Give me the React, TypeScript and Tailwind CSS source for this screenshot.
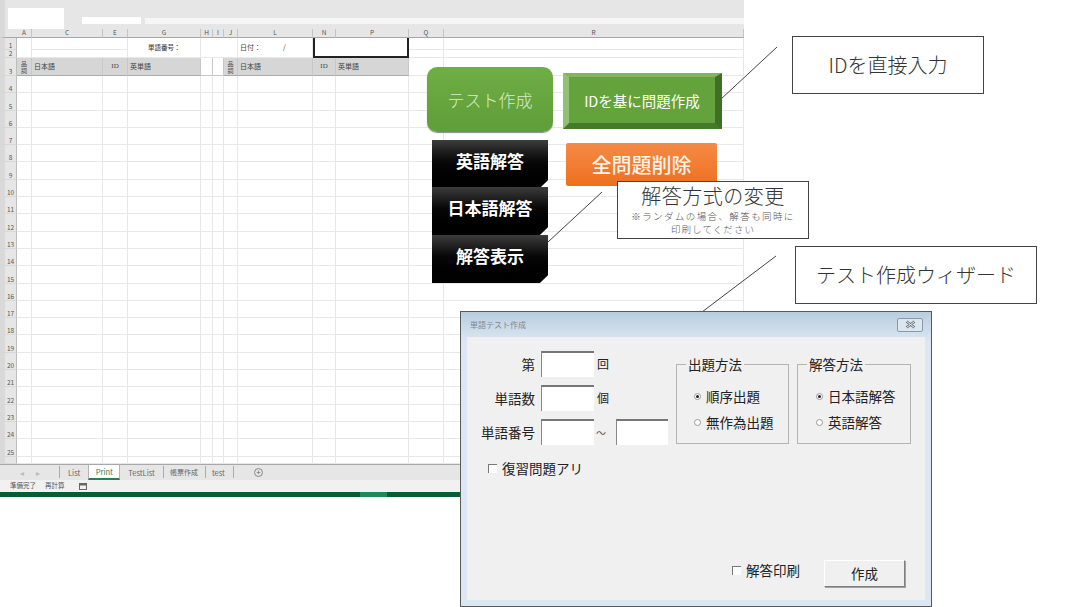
const columns = ["A", "C", "E", "G", "H", "I", "J", "L", "N", "P", "Q", "R"];
const rowNumbers = Array.from({ length: 22 }, (_, i) => i + 4);
const cell = "border-r border-b border-[#e8e8e8]";
const rowHead =
  "flex items-end justify-center border-l-[5px] border-l-[#d9d9d9] border-r border-b border-r-[#bdbdbd] border-b-[#d8d8d8] bg-[#e6e6e6] text-[6.5px] leading-[8px] text-[#555]";

function Sheet() {
  return (
    <div className="grid grid-cols-[17px_15px_71px_25px_73px_12px_11px_14px_75px_23px_73px_35px_300px] grid-rows-[9px_12px_8px_18px_repeat(22,17.3px)_7px] text-[#444]">
      <div className="border-l-[5px] border-l-[#d9d9d9] border-b border-b-[#a8a8a8] bg-[#e6e6e6]" />
      {columns.map((c) => (
        <div
          key={c}
          className="flex items-center justify-center border-r border-b border-r-[#c4c4c4] border-b-[#a8a8a8] bg-[#e6e6e6] text-[6.5px] text-[#555]"
        >
          {c}
        </div>
      ))}

      <div className={rowHead}>1</div>
      <div className={`row-span-2 ${cell}`} />
      <div className={`col-span-2 ${cell}`} />
      <div className={`row-span-2 flex items-center pl-5 text-[6.5px] font-medium ${cell}`}>単語番号：</div>
      <div className={`col-span-3 row-span-2 ${cell}`} />
      <div className={`row-span-2 flex items-center pl-0.5 text-[7px] ${cell}`}>
        <span className="w-[43px]">日付：</span>
        <span>/</span>
      </div>
      <div className="col-span-2 row-span-2 border-x-2 border-b-2 border-[#222]" />
      <div className={cell} />
      <div className={cell} />

      <div className={rowHead}>2</div>
      <div className={`col-span-2 ${cell}`} />
      <div className={cell} />
      <div className={cell} />

      <div className={rowHead}>3</div>
      <HeaderCells />
      <div className="border-r border-b border-[#c8c8c8]" />
      <div className="border-r border-b border-[#c8c8c8]" />
      <HeaderCells />
      <div className={cell} />
      <div className={cell} />

      {rowNumbers.map((n) => (
        <Row key={n} label={String(n)} />
      ))}
      <Row label="" />
    </div>
  );
}

function HeaderCells() {
  const grey = "flex items-center border-r border-b border-r-[#c8c8c8] border-b-[#ababab] bg-[#d6d6d6] text-[7px]";
  return (
    <>
      <div className={`${grey} justify-center`}>
        <span className="text-center text-[6px] leading-[7px]">
          品<br />詞
        </span>
      </div>
      <div className={`${grey} pl-[2px]`}>日本語</div>
      <div className={`${grey} justify-center font-['Liberation_Serif',serif] text-[6px]`}>ID</div>
      <div className={`${grey} pl-[2px]`}>英単語</div>
    </>
  );
}

function Row({ label }: { label: string }) {
  return (
    <>
      <div className={rowHead}>{label}</div>
      {columns.map((c) => (
        <div key={c} className={cell} />
      ))}
    </>
  );
}

function SheetBars() {
  return (
    <>
      <div className="flex h-[16.5px] items-center border-t border-[#a8a8a8] bg-[#e6e6e6] text-[7.5px] text-[#666]">
        <span className="ml-5 text-[#bbb]">◂</span>
        <span className="ml-3 text-[#bbb]">▸</span>
        <span className="ml-[19px] h-3 border-l border-[#aaa]" />
        <span className="px-2">List</span>
        <span className="flex h-full w-[32px] items-center justify-center border-x border-[#b4b4b4] border-b-2 border-b-[#2f7d55] bg-white text-[#2f7d55]">
          Print
        </span>
        <span className="px-2">TestList</span>
        <span className="h-3 border-l border-[#aaa]" />
        <span className="pr-[7px] pl-[6px] text-[7px]">帳票作成</span>
        <span className="h-3 border-l border-[#aaa]" />
        <span className="pr-2 pl-[6px]">test</span>
        <span className="h-3 border-l border-[#aaa]" />
        <span className="ml-[20px] flex h-[9px] w-[9px] items-center justify-center rounded-full border border-[#888] text-[8px] leading-none">
          +
        </span>
      </div>
      <div className="flex h-[11.5px] items-center bg-[#f1f1f1] pl-[10px] text-[6.5px] text-[#555]">
        <span>準備完了</span>
        <span className="ml-[9px]">再計算</span>
        <svg className="ml-[14px]" width="8" height="8" viewBox="0 0 8 8">
          <rect x="0.5" y="1.5" width="7" height="6" fill="none" stroke="#666" />
          <rect x="0.5" y="1.5" width="7" height="2" fill="#666" />
        </svg>
      </div>
      <div className="flex h-[5px] bg-[#0b5c33]">
        <div className="ml-[360px] w-[27px] bg-[#1d8a57]" />
      </div>
    </>
  );
}

function Snip({ text, top }: { text: string; top: string }) {
  return (
    <div
      className={`absolute left-[432px] flex h-[48px] w-[116px] justify-center bg-gradient-to-b from-[#3d3d3d] via-[#080808] via-45% to-black pt-[9px] text-[17px] font-bold leading-[24px] text-white [clip-path:polygon(0_0,100%_0,100%_84%,93%_100%,0_100%)] ${top}`}
    >
      {text}
    </div>
  );
}

function Shapes() {
  return (
    <>
      <svg className="absolute top-0 left-0" width="1080" height="607" viewBox="0 0 1080 607">
        <g stroke="#444" strokeWidth="1" fill="none">
          <line x1="720" y1="100" x2="777" y2="47" />
          <line x1="548" y1="242" x2="602" y2="192" />
          <line x1="776" y1="256" x2="702" y2="312" />
        </g>
      </svg>

      <div className="absolute top-[67px] left-[427px] flex h-[65px] w-[126px] items-center justify-center rounded-[10px] bg-gradient-to-b from-[#6fae45] to-[#5f9e38] text-[17px] font-light text-[#d7ecc9] shadow-[0_1px_1px_#8a8a8a]">
        テスト作成
      </div>
      <div className="absolute top-[73px] left-[563px] flex h-[56px] w-[159px] items-center justify-center border-t-[4px] border-r-[7px] border-b-[6px] border-l-[6px] border-t-[#84b364] border-r-[#3e6f24] border-b-[#457a29] border-l-[#94bf77] bg-[#64a23c] pt-[2px] text-[14.5px] text-white">
        IDを基に問題作成
      </div>

      <Snip text="英語解答" top="top-[140px]" />
      <Snip text="日本語解答" top="top-[187px]" />
      <Snip text="解答表示" top="top-[235px]" />

      <div className="absolute top-[143px] left-[566px] flex h-[43px] w-[151px] items-center justify-center rounded-[2px] bg-gradient-to-b from-[#f58a45] to-[#ee6f1c] text-[20px] font-medium text-[#fff3ea]">
        全問題削除
      </div>

      <div className="absolute top-[181px] left-[617px] flex h-[58px] w-[192px] flex-col items-center border border-[#444] bg-white text-[#555]">
        <div className="text-[20px] leading-[28px] font-light tracking-[0.5px] text-[#333]">解答方式の変更</div>
        <div className="text-[9.5px] leading-[13px] font-light tracking-[1.4px]">※ランダムの場合、解答も同時に</div>
        <div className="text-[9.5px] leading-[13px] font-light tracking-[1.1px]">印刷してください</div>
      </div>

      <div className="absolute top-[36px] left-[792px] flex h-[58px] w-[192px] items-center justify-center border border-[#444] bg-white text-[20px] font-light text-[#333]">
        IDを直接入力
      </div>
      <div className="absolute top-[246px] left-[795px] flex h-[58px] w-[242px] items-center justify-center border border-[#444] bg-white text-[20px] font-light text-[#333]">
        テスト作成ウィザード
      </div>
    </>
  );
}

function TextBox({ className = "w-[53px]" }: { className?: string }) {
  return <div className={`h-[26px] border-t-2 border-l border-t-[#777] border-l-[#888] bg-white ${className}`} />;
}

function Radio({ label, checked }: { label: string; checked?: boolean }) {
  return (
    <div className="flex h-[26px] items-center gap-[5px]">
      <span className="flex h-[7px] w-[7px] items-center justify-center rounded-full border border-[#999] bg-white">
        {checked && <span className="h-[3px] w-[3px] rounded-full bg-[#222]" />}
      </span>
      <span>{label}</span>
    </div>
  );
}

function GroupBox({ title, className, children }: { title: string; className: string; children: React.ReactNode }) {
  return (
    <div className={`relative h-[80px] border border-[#b4b4b4] ${className}`}>
      <span className="absolute -top-[11px] left-[9px] bg-[#f0f0f0] px-[2px] leading-[20px]">{title}</span>
      {children}
    </div>
  );
}

function CheckBox({ label }: { label: string }) {
  return (
    <div className="flex items-center gap-[5px]">
      <span className="h-[9px] w-[9px] border-t border-l border-[#777] bg-white" />
      <span>{label}</span>
    </div>
  );
}

function Dialog() {
  const labelCls = "w-[68px] text-right whitespace-nowrap";
  return (
    <div className="absolute top-[311px] left-[460px] flex h-[296px] w-[472px] flex-col border border-[#5a5a5a] bg-gradient-to-b from-[#b9cde0] via-[#dbe7f2] via-10% to-[#dbe7f2] px-[6px] pb-[6px]">
      <div className="flex h-[25px] shrink-0 items-center justify-between pr-[2px] pl-[3px] text-[8px] text-[#7d8894]">
        <span>単語テスト作成</span>
        <span className="flex h-[14px] w-[26px] items-center justify-center rounded-[2px] border border-[#8a9aa8] bg-[#dce6ee]">
          <svg width="11" height="9" viewBox="0 0 11 9">
            <path d="M1.5 1.5 L9.5 7.5 M9.5 1.5 L1.5 7.5" stroke="#66707a" strokeWidth="2.6" fill="none" />
            <path d="M1.5 1.5 L9.5 7.5 M9.5 1.5 L1.5 7.5" stroke="#f2f5f8" strokeWidth="1" fill="none" />
          </svg>
        </span>
      </div>
      <div className="flex flex-1 flex-col bg-[#f0f0f0] text-[13.5px] text-[#222]">
        <div className="flex pt-[14px]">
          <div className="flex w-[209px] flex-col gap-2">
            <div className="flex items-center gap-[6px]">
              <span className={labelCls}>第</span>
              <TextBox />
              <span className="-ml-[3px] text-[12px]">回</span>
            </div>
            <div className="flex items-center gap-[6px]">
              <span className={labelCls}>単語数</span>
              <TextBox />
              <span className="-ml-[3px] text-[12px]">個</span>
            </div>
            <div className="flex items-center">
              <span className={`${labelCls} mr-[6px]`}>単語番号</span>
              <TextBox />
              <span className="w-[22px] pl-[2px] text-[10px] text-[#555]">～</span>
              <TextBox className="w-[52px]" />
            </div>
          </div>
          <div className="mt-[13px] flex gap-2">
            <GroupBox title="出題方法" className="w-[113px]">
              <div className="pt-[18px] pl-[17px]">
                <Radio label="順序出題" checked />
                <Radio label="無作為出題" />
              </div>
            </GroupBox>
            <GroupBox title="解答方法" className="w-[114px]">
              <div className="pt-[18px] pl-[18px]">
                <Radio label="日本語解答" checked />
                <Radio label="英語解答" />
              </div>
            </GroupBox>
          </div>
        </div>
        <div className="mt-[13px] pl-[21px]">
          <CheckBox label="復習問題アリ" />
        </div>
        <div className="mt-auto flex items-center justify-end gap-[24px] pr-[20px] pb-[13px]">
          <div className="mb-[6px]">
            <CheckBox label="解答印刷" />
          </div>
          <div className="flex h-[27px] w-[81px] items-center justify-center border border-t-white border-l-white border-r-[#808080] border-b-[#808080] bg-[#f0f0f0] shadow-[1px_1px_0_#a0a0a0]">
            作成
          </div>
        </div>
      </div>
    </div>
  );
}

export default function App() {
  return (
    <div className="relative h-[607px] w-[1080px] overflow-hidden bg-white font-['Noto_Sans_CJK_JP',sans-serif]">
      <div className="w-[744px]">
        <div className="flex h-[29px] items-start border-l-[5px] border-[#d9d9d9] bg-[#e6e6e6]">
          <div className="mt-[8px] ml-[3px] h-[21px] w-[56px] bg-white" />
          <div className="mt-[17px] ml-[18px] h-[7px] w-[59px] bg-white" />
          <div className="mt-[18px] ml-[4px] h-[6px] flex-1 bg-[#f6f6f6]" />
        </div>
        <Sheet />
        <SheetBars />
      </div>
      <Shapes />
      <Dialog />
    </div>
  );
}
